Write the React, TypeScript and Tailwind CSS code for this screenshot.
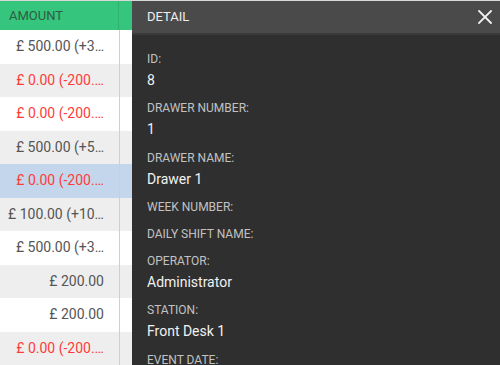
import React from "react";

const rows: { text: string; red: boolean; bg: string }[] = [
  { text: "£ 500.00 (+3…", red: false, bg: "bg-white" },
  { text: "£ 0.00 (-200.…", red: true, bg: "bg-[#eeeeee]" },
  { text: "£ 0.00 (-200.…", red: true, bg: "bg-white" },
  { text: "£ 500.00 (+5…", red: false, bg: "bg-[#eeeeee]" },
  { text: "£ 0.00 (-200.…", red: true, bg: "bg-[#c3d6ec]" },
  { text: "£ 100.00 (+10…", red: false, bg: "bg-[#eeeeee]" },
  { text: "£ 500.00 (+3…", red: false, bg: "bg-white" },
  { text: "£ 200.00", red: false, bg: "bg-[#eeeeee]" },
  { text: "£ 200.00", red: false, bg: "bg-white" },
  { text: "£ 0.00 (-200.…", red: true, bg: "bg-[#eeeeee]" },
];

const fields: { label: string; value?: string }[] = [
  { label: "ID:", value: "8" },
  { label: "DRAWER NUMBER:", value: "1" },
  { label: "DRAWER NAME:", value: "Drawer 1" },
  { label: "WEEK NUMBER:" },
  { label: "DAILY SHIFT NAME:" },
  { label: "OPERATOR:", value: "Administrator" },
  { label: "STATION:", value: "Front Desk 1" },
  { label: "EVENT DATE:" },
];

export default function App() {
  return (
    <div
      className="w-[500px] h-[365px] overflow-hidden flex bg-white"
      style={{ fontFamily: "Roboto, 'Noto Sans', sans-serif" }}
    >
      <div className="w-[132px] flex flex-col shrink-0">
        <div className="h-[34px] flex bg-[#35c57c] border-t border-[#d8d8d8]">
          <div className="w-[119px] flex items-center pl-[9px] text-[13px] text-[#2f5c42] border-r border-[#2fb26f]">
            AMOUNT
          </div>
          <div className="flex-1" />
        </div>
        {rows.map((r, i) => (
          <div key={i} className={`h-[33.5px] flex shrink-0 ${r.bg}`}>
            <div
              className={`w-[120px] border-r border-[#cfcfcf] flex items-center justify-end pr-[15px] text-[14px] whitespace-nowrap ${
                r.red ? "text-[#ff3b3b]" : "text-[#555555]"
              }`}
            >
              {r.text}
            </div>
            <div className="flex-1" />
          </div>
        ))}
      </div>
      <div className="flex-1 flex flex-col bg-[#2f2f2f]">
        <div className="h-[35px] shrink-0 flex flex-col">
          <div className="h-px bg-[#d8d8d8]" />
          <div className="flex-1 bg-[#4a4a4a] flex items-center justify-between pl-[15px] pr-[8px]">
            <span className="text-[13px] text-[#eeeeee]">DETAIL</span>
            <svg width="14" height="14" viewBox="0 0 14 14">
              <path d="M1 1 L13 13 M13 1 L1 13" stroke="#f2f2f2" strokeWidth="1.8" strokeLinecap="square" />
            </svg>
          </div>
          <div className="h-[2px] bg-[#3a3a3a]" />
        </div>
        <div className="pt-[14px] pl-[15px] flex flex-col">
          {fields.map((f, i) => (
            <div key={i} className="flex flex-col mb-[6.7px]">
              <div className="h-[20px] flex items-center text-[12px] text-[#c2c2c2]">{f.label}</div>
              {f.value && (
                <div className="h-[22.8px] flex items-center text-[14px] text-[#f2f2f2]">{f.value}</div>
              )}
            </div>
          ))}
        </div>
      </div>
    </div>
  );
}
